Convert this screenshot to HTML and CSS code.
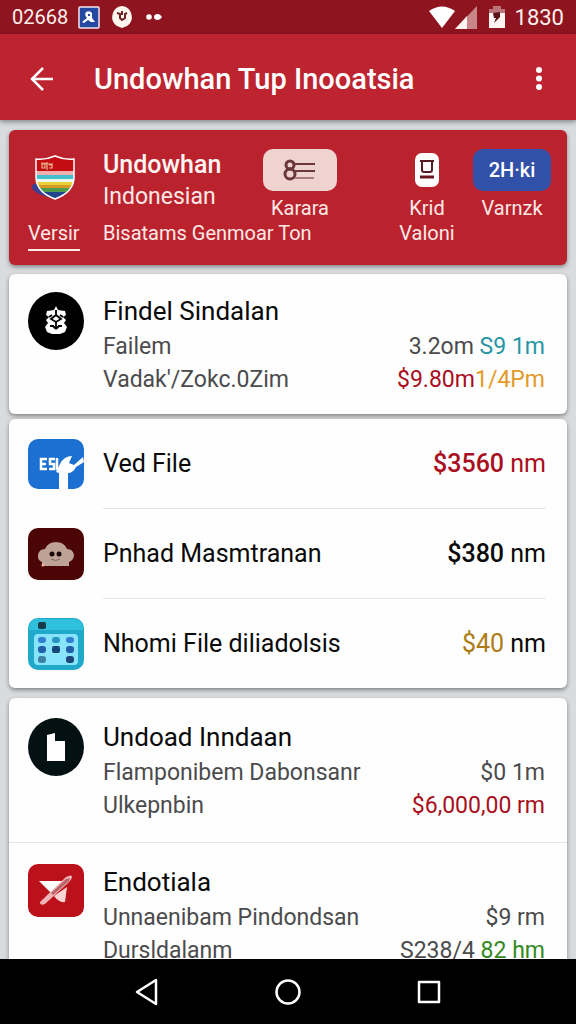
FILE: index.html
```
<!DOCTYPE html>
<html lang="id">
<head>
    <meta charset="UTF-8">
    <meta name="viewport" content="width=device-width, initial-scale=1.0">
    <title>Undowhan Tup Inooatsia</title>
    <link rel="stylesheet" href="styles.css">
</head>
<body>
    <!-- Status bar -->
    <div class="status-bar">
        <span class="status-code">02668</span>
        <svg class="status-app" width="22" height="23" viewBox="0 0 22 23">
            <rect x="1" y="1" width="20" height="21" rx="1" fill="#2449a0" stroke="#f3e3ee" stroke-width="1.5"/>
            <path d="M8 6q4-2 6 1v5l3 4h-4l-3-2-4 3-2-1 5-4q-3-3-1-6z" fill="#fff"/>
            <path d="M10 8h2v2h-2z" fill="#2449a0"/>
        </svg>
        <svg class="status-badge" width="24" height="24" viewBox="0 0 24 24">
            <path d="M12 1a11 11 0 0 1 5 20l-5 2-5-2a11 11 0 0 1 5-20z" fill="#fff8f0"/>
            <path d="M7 8l3 1v4l2 2 3-2V9l2-1M12 6v4" fill="none" stroke="#6d2020" stroke-width="2"/>
        </svg>
        <svg width="18" height="8" viewBox="0 0 18 8">
            <circle cx="4" cy="4" r="2.8" fill="#fff"/>
            <path d="M9 4q0-3 4-3 2 0 4 3-2 3-4 3-4 0-4-3z" fill="#fff"/>
        </svg>
        <div class="status-right">
            <svg width="50" height="24" viewBox="0 0 50 24">
                <path d="M1 6q13-9 26 0L14 23z" fill="#fff"/>
                <path d="M49 1v23H27z" fill="#c98488"/>
                <path d="M39 11v13H27z" fill="#fff3f0"/>
            </svg>
            <svg class="battery" width="16" height="24" viewBox="0 0 16 24">
                <path d="M4 1h8v3h4v6H0V4h4z" fill="#bd7478"/>
                <path d="M0 8h16v15H0z" fill="#fff5f2"/>
                <path d="M4 8l7-1v5l-6 6 2-5H5z" fill="#5a1016"/>
            </svg>
            <span>1830</span>
        </div>
    </div>

    <header class="app-bar">
        <button class="icon-btn" aria-label="Back">
            <svg width="26" height="26" viewBox="0 0 26 26" fill="none" stroke="#fff" stroke-width="2.5">
                <path d="M25 13H4M15 2L4 13l11 11"/>
            </svg>
        </button>
        <h1>Undowhan Tup Inooatsia</h1>
        <button class="icon-btn menu-btn" aria-label="Menu">
            <svg width="8" height="26" viewBox="0 0 8 26" fill="#fff">
                <circle cx="4" cy="4" r="3"/>
                <circle cx="4" cy="12.500" r="3"/>
                <circle cx="4" cy="21" r="3"/>
            </svg>
        </button>
    </header>

    <main>
        <section class="card hero">
            <div class="hero-logo">
                <svg width="46" height="48" viewBox="0 0 46 48">
                    <path d="M2 31q6-3 10 1l12 9-6 2Q0 38 2 31z" fill="#3c3f90"/>
                    <clipPath id="shield"><path d="M6 5q10 1 19-3 9 4 19 3v18q0 15-19 22Q6 38 6 23z"/></clipPath>
                    <g clip-path="url(#shield)">
                        <rect width="46" height="48" fill="#c40d12"/>
                        <rect y="17" width="46" height="5" fill="#f1b0b0"/>
                        <rect y="21" width="46" height="4" fill="#43bfd0"/>
                        <rect y="25" width="46" height="3" fill="#eafaf2"/>
                        <rect y="28" width="46" height="3" fill="#e8cf3c"/>
                        <rect y="31" width="46" height="3" fill="#d79a22"/>
                        <rect y="34" width="46" height="4" fill="#4d9c50"/>
                        <rect y="38" width="46" height="9" fill="#21458c"/>
                    </g>
                    <path d="M12 10h3v4h-3zM17 8v8M19 11h3v3h-3M11 9l12 1" fill="none" stroke="#e9b58a" stroke-width="1.2"/>
                    <path d="M6 5q10 1 19-3 9 4 19 3v18q0 15-19 22Q6 38 6 23z" fill="none" stroke="#fff" stroke-width="1.500"/>
                </svg>
            </div>
            <div class="hero-text">
                <h2>Undowhan</h2>
                <p>Indonesian</p>
            </div>
            <button class="stat">
                <span class="pill pill-pink">
                    <svg width="36" height="24" viewBox="0 0 36 24" fill="none" stroke="#68363b">
                        <circle cx="8" cy="7" r="4" stroke-width="3"/>
                        <circle cx="8" cy="16" r="5" stroke-width="3"/>
                        <path d="M13 6h20M13 13h20" stroke-width="2"/>
                        <path d="M13 20h19" stroke="#a97d80" stroke-width="2"/>
                    </svg>
                </span>
                Karara
            </button>
            <button class="stat stat-mid">
                <span class="pill">
                    <svg width="24" height="34" viewBox="0 0 24 34">
                        <rect width="24" height="34" rx="7" fill="#fff"/>
                        <path d="M5 8h14M7 8v9q0 2 2 2h6q2 0 2-2V8" fill="none" stroke="#571d24" stroke-width="2"/>
                        <path d="M5 24h14" stroke="#6c1620" stroke-width="3"/>
                    </svg>
                </span>
                Krid
            </button>
            <button class="stat">
                <span class="pill pill-blue">2H·ki</span>
                Varnzk
            </button>
            <a href="#" class="tab active">Versir</a>
            <p class="hero-note">Bisatams Genmoar Ton</p>
            <p class="stat-mid hero-extra">Valoni</p>
        </section>

        <section class="card item">
            <svg class="item-icon" width="56" height="58" viewBox="0 0 56 58">
                <ellipse cx="28" cy="29" rx="28" ry="29" fill="#000"/>
                <path d="M28 14l2 4 7 1 1 4-3 2 3 3-2 3 3 4-2 5-5 2h-8l-5-2-2-5 3-4-2-3 3-3-3-2 1-4 7-1z" fill="#fff"/>
                <path d="M28 18v5M28 23l-5 4 5 3 5-3zM28 30v7M22 34h4M30 34h4M21 25l3-2M35 25l-3-2M28 37l-3-3M28 37l3-3" fill="none" stroke="#000" stroke-width="1.8"/>
            </svg>
            <div class="item-body">
                <h3>Findel Sindalan</h3>
                <p><span>Failem</span><span>3.2om <b class="teal">S9 1m</b></span></p>
                <p><span>Vadak'/Zokc.0Zim</span><span><b class="red">$9.80m</b><b class="amber">1/4Pm</b></span></p>
            </div>
        </section>

        <ul class="card rows">
            <li>
                <svg class="item-icon" width="56" height="50" viewBox="0 0 56 50">
                    <rect width="56" height="50" rx="10" fill="#1c70d2"/>
                    <path d="M19 20h-6v10h6M13 25h5M27 20h-5v5h4v5h-5M29 19v12" fill="none" stroke="#fff" stroke-width="2.5"/>
                    <path d="M31 50V34l-3-1q2-4 4-8 4-8 12-8l-3 7 5 2 9-8 1 5-8 5q-3 6-8 6v16z" fill="#fff"/>
                </svg>
                <div class="row-body"><span>Ved File</span><span class="price red"><b>$3560</b> nm</span></div>
            </li>
            <li>
                <svg class="item-icon" width="56" height="52" viewBox="0 0 56 52">
                    <rect width="56" height="52" rx="10" fill="#4b0504"/>
                    <path d="M14 38v-4q-5-2-4-7 1-6 7-6 3-7 11-7t11 7q6 0 7 6 0 5-5 7v4z" fill="#bda395"/>
                    <circle cx="24" cy="26" r="2.5" fill="#1b0808"/>
                    <circle cx="31" cy="26" r="2.5" fill="#1b0808"/>
                    <path d="M23 31q5 3 9 0" fill="none" stroke="#80665e"/>
                    <circle cx="15" cy="37" r="1.500" fill="#f6ab94"/>
                </svg>
                <div class="row-body"><span>Pnhad Masmtranan</span><span class="price"><b>$380</b> nm</span></div>
            </li>
            <li>
                <svg class="item-icon" width="56" height="52" viewBox="0 0 56 52">
                    <rect width="56" height="52" rx="10" fill="#20a9cb"/>
                    <path d="M1 12Q1 1 10 1h36q9 0 9 11z" fill="#2fc0dc"/>
                    <rect x="6" y="16" width="44" height="31" rx="4" fill="#87e4fb"/>
                    <rect x="10" y="4" width="8" height="7" rx="2" fill="#173c49"/>
                    <g fill="#327fce">
                        <rect x="10" y="19" width="8" height="6" rx="3"/>
                        <rect x="24" y="19" width="8" height="6" rx="3" fill="#2894bd"/>
                        <rect x="38" y="19" width="8" height="6" rx="3"/>
                        <rect x="10" y="28" width="8" height="7" rx="3" fill="#235eaa"/>
                        <rect x="24" y="28" width="8" height="7" rx="2" fill="#17467d"/>
                        <rect x="38" y="28" width="8" height="7" rx="3" fill="#235eaa"/>
                        <rect x="10" y="38" width="8" height="7" rx="3" fill="#3d81a2"/>
                        <rect x="38" y="38" width="8" height="7" rx="3" fill="#1c477d"/>
                    </g>
                </svg>
                <div class="row-body"><span>Nhomi File diliadolsis</span><span class="price"><span class="gold">$40</span> nm</span></div>
            </li>
        </ul>

        <section class="card last-card">
            <div class="item">
                <svg class="item-icon" width="56" height="58" viewBox="0 0 56 58">
                    <ellipse cx="28" cy="29" rx="28" ry="29" fill="#031113"/>
                    <path d="M19 17l8-2v8h10v20H19z" fill="#fff"/>
                </svg>
                <div class="item-body">
                    <h3>Undoad Inndaan</h3>
                    <p><span>Flamponibem Dabonsanr</span><span>$0 1m</span></p>
                    <p><span>Ulkepnbin</span><span class="red">$6,000,00 rm</span></p>
                </div>
            </div>
            <div class="item">
                <svg class="item-icon" width="56" height="54" viewBox="0 0 56 54">
                    <rect y="1" width="56" height="53" rx="10" fill="#ba111b"/>
                    <path d="M11 18h25L24 31z" fill="#fff"/>
                    <path d="M39 24l-2 15q-6 1-11-6z" fill="#f8d4d4"/>
                    <path d="M12 39L38 14q6-3 6 0 0 2-3 5L17 41q-5 2-5-2z" fill="#f2b3b4"/>
                    <path d="M23 30l15-14 4-1-1 3-16 14z" fill="#b8646a"/>
                </svg>
                <div class="item-body">
                    <h3>Endotiala</h3>
                    <p><span>Unnaenibam Pindondsan</span><span>$9 rm</span></p>
                    <p><span>Dursldalanm</span><span>S238/4 <b class="green">82 hm</b></span></p>
                </div>
            </div>
        </section>
    </main>

    <nav class="system-nav">
        <button aria-label="Back">
            <svg width="28" height="28" viewBox="0 0 28 28" fill="none" stroke="#fff" stroke-width="2.5" stroke-linejoin="round"><path d="M23 2v24L4 14z"/></svg>
        </button>
        <button aria-label="Home">
            <svg width="28" height="28" viewBox="0 0 28 28" fill="none" stroke="#fff" stroke-width="2.5"><circle cx="14" cy="14" r="11.500"/></svg>
        </button>
        <button aria-label="Recent apps">
            <svg width="28" height="28" viewBox="0 0 28 28" fill="none" stroke="#fff" stroke-width="2.5" stroke-linejoin="round"><path d="M4 4h20v20H4z"/></svg>
        </button>
    </nav>
</body>
</html>
```
FILE: styles.css
```
* {
    margin: 0;
    padding: 0;
    box-sizing: border-box;
}

:root {
    --red: #bd2430;
    --red-dark: #8e1520;
    --price-red: #a90f20;
    --text: #0a0a0a;
    --text-light: #4b4b4d;
    --line: #e6e6e7;
    --bg: #dadbdd;
}

body {
    height: 100vh;
    display: flex;
    flex-direction: column;
    overflow: hidden;
    background-color: var(--bg);
    color: var(--text);
    font-family: Roboto, "Liberation Sans", sans-serif;
    font-size: 23px;
}

button {
    border: none;
    background: none;
    color: inherit;
    font: inherit;
    cursor: pointer;
}

svg {
    display: block;
    flex-shrink: 0;
}

/* Status bar */
.status-bar {
    display: flex;
    align-items: center;
    flex-shrink: 0;
    height: 34px;
    padding: 0 12px;
    background-color: var(--red-dark);
    color: #fff0ec;
    font-size: 22px;
}

.status-code {
    font-size: 20px;
}

.status-app {
    margin-left: 10px;
}

.status-badge {
    margin: 0 11px 0 10px;
}

.status-right {
    display: flex;
    align-items: center;
    margin-left: auto;
}

.battery {
    margin: 0 10px 0 11px;
}

/* App bar */
.app-bar {
    display: flex;
    align-items: center;
    flex-shrink: 0;
    height: 86px;
    padding: 3px 28px 0;
    background-color: var(--red);
    color: #fff;
    box-shadow: 0 2px 5px rgba(0, 0, 0, 0.4);
    z-index: 1;
}

.app-bar h1 {
    flex: 1;
    margin-left: 40px;
    font-size: 29px;
    font-weight: 500;
    white-space: nowrap;
}

.menu-btn {
    padding: 0 5px;
}

/* Cards */
main {
    flex: 1;
    min-height: 0;
    overflow: hidden;
    padding: 10px 9px 0;
}

.card {
    background-color: #fefefe;
    border-radius: 6px;
    box-shadow: 0 2px 4px rgba(0, 0, 0, 0.4);
}

.hero {
    display: grid;
    grid-template-columns: 75px 1fr 74px 136px 78px;
    grid-template-rows: 72px 44px;
    padding: 19px 16px 0 19px;
    margin-bottom: 9px;
    background-color: #ba232e;
    color: #ffe9e6;
}

.hero-logo {
    padding: 5px 0 0 2px;
}

.hero-text {
    line-height: 32px;
}

.hero-text h2 {
    color: #fff5f2;
    font-size: 25px;
    font-weight: 500;
}

.stat {
    display: flex;
    flex-direction: column;
    align-items: center;
    font-size: 20px;
    line-height: 34px;
}

.stat-mid {
    padding-left: 44px;
}

.pill {
    display: flex;
    align-items: center;
    justify-content: center;
    flex-shrink: 0;
    width: 100%;
    height: 42px;
    border-radius: 10px;
}

.pill-pink {
    background-color: #efd3cf;
}

.pill-blue {
    background-color: #3150a8;
    color: #fff;
    font-size: 20px;
    font-weight: 500;
}

.tab {
    justify-self: start;
    align-self: start;
    padding-bottom: 4px;
    color: inherit;
    font-size: 20px;
    line-height: 24px;
    text-decoration: none;
}

.tab.active {
    border-bottom: 2px solid #ffe9e6;
}

.hero-note {
    grid-column: span 2;
    font-size: 20px;
    line-height: 24px;
    white-space: nowrap;
}

.hero-extra {
    font-size: 20px;
    line-height: 24px;
    text-align: center;
}

.item {
    display: flex;
    padding: 18px 22px 18px 19px;
    color: var(--text-light);
}

.item-icon {
    margin-right: 19px;
}

.item-body {
    flex: 1;
}

.item h3 {
    color: var(--text);
    font-size: 26px;
    font-weight: 400;
    line-height: 38px;
}

.item p {
    display: flex;
    justify-content: space-between;
    line-height: 33px;
    white-space: nowrap;
}

.item b {
    font-weight: 400;
}

/* Rows with one price */
.rows {
    margin: 5px 0 10px;
    list-style: none;
    font-size: 25px;
}

.rows li {
    display: flex;
    align-items: center;
    padding: 0 21px 0 19px;
}

.row-body {
    display: flex;
    align-items: center;
    justify-content: space-between;
    flex: 1;
    height: 90px;
    border-bottom: 1px solid var(--line);
}

.rows li:last-child .row-body {
    height: 89px;
    border-bottom: none;
}

.price b {
    font-weight: 500;
}

.last-card .item {
    padding-top: 20px;
    padding-bottom: 20px;
}

.last-card .item + .item {
    border-top: 1px solid var(--line);
}

.red {
    color: var(--price-red);
}

.teal {
    color: #2795a5;
}

.amber {
    color: #e39a28;
}

.gold {
    color: #ad7b18;
}

.green {
    color: #328a1f;
}

/* System navigation */
.system-nav {
    display: flex;
    align-items: center;
    justify-content: center;
    gap: 113px;
    flex-shrink: 0;
    height: 65px;
    background-color: #000;
    z-index: 1;
}
```
